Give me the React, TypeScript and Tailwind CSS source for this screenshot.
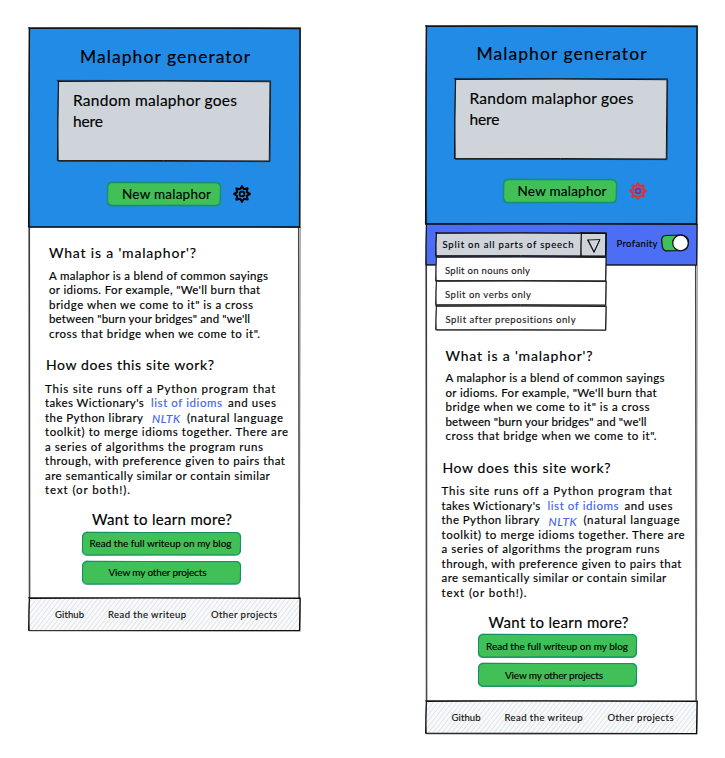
import { useLayoutEffect, useRef, useState, type ReactNode } from "react";

/** One line of text whose tracking is adjusted so that it fills the given width. */
function Line({ w, className = "", children }: { w: number; className?: string; children: ReactNode }) {
  const ref = useRef<HTMLSpanElement>(null);
  const [spacing, setSpacing] = useState(0);
  useLayoutEffect(() => {
    const el = ref.current;
    if (!el) return;
    el.style.letterSpacing = "0px";
    const natural = el.getBoundingClientRect().width;
    const count = Math.max(1, (el.textContent ?? "").length - 1);
    const next = (w - natural) / count;
    el.style.letterSpacing = `${next}px`;
    setSpacing(next);
  }, [w]);
  return (
    <div className={`whitespace-pre ${className}`}>
      <span ref={ref} style={{ letterSpacing: `${spacing}px` }}>
        {children}
      </span>
    </div>
  );
}

/** Hand-drawn outline: two slightly disagreeing strokes. */
function Sketch({ w, h, color = "#111", k = 1, r = 0, sw = 1 }: { w: number; h: number; color?: string; k?: number; r?: number; sw?: number }) {
  return (
    <svg className="pointer-events-none absolute inset-0 overflow-visible" width={w} height={h} fill="none" stroke={color} strokeWidth={sw} strokeLinecap="round">
      {r > 0 ? (
        <>
          <rect x={0.5} y={0.5} width={w - 1} height={h - 1} rx={r} />
          <path opacity={0.6} d={`M${r} 0Q${w / 2} ${k} ${w - r} 0.6Q${w} 0 ${w - 0.2} ${r}L${w - 1} ${h - r}Q${w} ${h} ${w - r} ${h - 0.3}Q${w / 2} ${h - 1} ${r} ${h}Q0 ${h} 0.3 ${h - r}L0.8 ${r}Q0 0 ${r} 0`} />
        </>
      ) : (
        <>
          <path d={`M0 ${0.4 * k}Q${w / 2} ${-0.4 * k} ${w} ${0.6 * k}L${w - 0.6 * k} ${h}Q${w / 2} ${h - 0.6 * k} ${-0.5 * k} ${h - 0.3 * k}L0.4 0`} />
          <path opacity={0.65} d={`M${-0.6 * k} ${-0.5 * k}L${w + 0.5 * k} ${-0.2 * k}Q${w + 0.5 * k} ${h / 2} ${w} ${h + 0.5 * k}L0.6 ${h + 0.3}Q${-k} ${h / 2} ${0.6 * k} ${-0.5 * k}`} />
        </>
      )}
    </svg>
  );
}

/** The two faint side strokes of the page body. */
function Sides({ h }: { h: number }) {
  return (
    <svg className="pointer-events-none absolute inset-0 overflow-visible" width={271} height={h} fill="none" stroke="#222" strokeWidth={1.1}>
      <path opacity={0.85} d={`M0.5 0L0.8 ${h}M269.5 0L270 ${h}`} />
      <path opacity={0.6} d={`M-0.3 0L0.2 ${h}M271.1 0L270.4 ${h}`} />
    </svg>
  );
}

function Gear({ color, inner }: { color: string; inner: string }) {
  return (
    <svg width="18" height="18" viewBox="-9 -9 18 18" fill="none" stroke={color} strokeWidth="2.1" strokeLinejoin="round">
      <path d="M0-7.8L1.8-4.8L5.5-5.7L4.7-2L7.8 0L4.7 1.9L5.6 5.5L2 4.7L0 7.8L-1.9 4.8L-5.6 5.6L-4.8 2L-7.8 0L-4.8-1.9L-5.5-5.5L-1.9-4.7Z" />
      <circle r="2.4" stroke={inner} strokeWidth="1.7" />
    </svg>
  );
}

function Header({ tall, active }: { tall: number; active?: boolean }) {
  return (
    <header className={`relative bg-[#228be6] ${active ? "h-[198px] pt-[18px]" : "h-[199px] pt-[19px]"}`}>
      <Line w={170} className="ml-[51px] text-[17.5px] leading-5">Malaphor generator</Line>
      <div className={`relative ml-[29px] h-20 w-[212px] bg-[#ced4da] pt-[9px] pl-[15px] text-[15.5px] leading-[21px] ${active ? "mt-[15px]" : "mt-[14px]"}`}>
        <Sketch w={212} h={80} k={1.2} />
        <Line w={164}>Random malaphor goes</Line>
        <Line w={30}>here</Line>
      </div>
      <div className={`flex items-center gap-[12px] ${active ? "mt-5 ml-[77px]" : "mt-[20.5px] ml-[78px]"}`}>
        <button className="relative block h-6 w-[114px] rounded-[5px] bg-[#40c057] pl-[15px] text-left text-[13.5px] leading-[22px]">
          <Sketch w={114} h={24} r={5} color="#159078" sw={1.3} />
          <Line w={89}>New malaphor</Line>
        </button>
        <Gear color={active ? "#e03131" : "#000"} inner={active ? "#a61e70" : "#000"} />
      </div>
      <Sketch w={271} h={tall} k={0.8} sw={1.3} />
    </header>
  );
}

const MALAPHOR: [number, string][] = [
  [219, "A malaphor is a blend of common sayings"],
  [211, 'or idioms. For example, "We\'ll burn that'],
  [204, 'bridge when we come to it" is a cross'],
  [201, 'between "burn your bridges" and "we\'ll'],
  [211, 'cross that bridge when we come to it".'],
];

const WORK: [number, string][] = [
  [243, "toolkit) to merge idioms together. There are"],
  [218, "a series of algorithms the program runs"],
  [240, "through, with preference given to pairs that"],
  [225, "are semantically similar or contain similar"],
  [85, "text (or both!)."],
];

function Body() {
  return (
    <>
      <Line w={147} className="ml-5 text-[14px] leading-[18px]">What is a 'malaphor'?</Line>
      <div className="mt-[6.5px] ml-5 text-[11.5px] leading-[14.5px]">
        {MALAPHOR.map(([w, t]) => (
          <Line key={t} w={w}>{t}</Line>
        ))}
      </div>
      <Line w={168} className="mt-[15px] ml-[17px] text-[14px] leading-[18px]">How does this site work?</Line>
      <div className="mt-[7.5px] ml-4 text-[11.5px] leading-[14.5px]">
        <Line w={230}>This site runs off a Python program that</Line>
        <div className="flex">
          <Line w={99} className="w-[106px]">takes Wictionary's</Line>
          <Line w={71} className="w-[77px] text-[#4263eb]">list of idioms</Line>
          <Line w={48}>and uses</Line>
        </div>
        <div className="flex h-[14.5px]">
          <Line w={98} className="w-[107px]">the Python library</Line>
          <Line w={28} className="w-[35px] pt-[1.5px] text-[#4263eb] italic">NLTK</Line>
          <Line w={96}>(natural language</Line>
        </div>
        {WORK.map(([w, t]) => (
          <Line key={t} w={w}>{t}</Line>
        ))}
      </div>
      <Line w={140} className="mt-[12.5px] ml-[63px] text-[15px] leading-[18px]">Want to learn more?</Line>
      <div className="mt-[3.5px] ml-[52.5px] flex flex-col gap-[5.5px] text-[10px] leading-[22px]">
        <button className="relative block h-[23.5px] w-[159px] rounded-[5px] bg-[#40c057] pl-[8px] text-left">
          <Sketch w={159} h={23.5} r={5} color="#159068" />
          <Line w={142}>Read the full writeup on my blog</Line>
        </button>
        <button className="relative block h-[23.5px] w-[159px] rounded-[5px] bg-[#40c057] pl-[27px] text-left">
          <Sketch w={159} h={23.5} r={5} color="#159068" />
          <Line w={98}>View my other projects</Line>
        </button>
      </div>
    </>
  );
}

function Footer() {
  return (
    <footer className="relative flex h-8 bg-[repeating-linear-gradient(128deg,#f8f9fa_0px,#f8f9fa_2px,#dfe3e6_2.8px,#f8f9fa_3.7px)] pl-[26px] text-[9.5px] leading-[33px] text-[#111]">
      <Line w={29} className="w-[53px]">Github</Line>
      <Line w={78} className="w-[103px]">Read the writeup</Line>
      <Line w={66}>Other projects</Line>
      <Sketch w={271} h={32.5} k={0.9} sw={1.1} />
    </footer>
  );
}

function Option({ w, label, pad }: { w: number; label: string; pad: string }) {
  return (
    <div className={`relative h-[24.7px] bg-white text-[9.5px] leading-[27px] text-[#222] ${pad}`}>
      <Line w={w}>{label}</Line>
      <Sketch w={170} h={24} k={0.9} color="#222" />
    </div>
  );
}

function Settings() {
  return (
    <div className="relative z-10 h-[41px] bg-[#4c6ef5]">
      <Sketch w={271} h={41} k={0.7} />
      <div className="flex pt-[9px] pl-[10px]">
        <div className="relative h-[23px] w-[170px]">
          <div className="flex h-[23px] bg-[#ced4da] text-[9.5px] leading-[24px]">
            <Line w={131} className="w-[145px] pl-[7px]">Split on all parts of speech</Line>
            <div className="relative h-[24px] w-[25px]">
              <Sketch w={25} h={24} k={0.7} />
              <svg width="25" height="24" fill="none" stroke="#111" strokeWidth="0.9">
                <path d="M6.5 7L19 6.5L13 19.5ZM7 6.5L13 18.7L18.7 7" />
              </svg>
            </div>
          </div>
          <Sketch w={170} h={23} k={0.9} />
          <div className="absolute top-[23.5px] left-0 w-[170px]">
            <Option w={85} pad="pl-[9.5px]" label="Split on nouns only" />
            <Option w={86} pad="pl-[9.5px]" label="Split on verbs only" />
            <Option w={130} pad="pl-[10px]" label="Split after prepositions only" />
          </div>
        </div>
        <Line w={41} className="ml-[11px] w-[43.5px] text-[9.5px] leading-[21px]">Profanity</Line>
        <svg width="31" height="20" viewBox="0 0 31 20" className="overflow-visible" stroke="#111" strokeWidth="1.2">
          <path fill="#40c057" d="M6 2.5L22 2Q29 3 28.5 10Q28 17 22 17.5L6 17.8Q2.5 17 2.3 13L1.6 7Q2 2.5 6 2.5Z" />
          <circle cx="20.5" cy="10" r="7.8" fill="#fff" />
        </svg>
      </div>
    </div>
  );
}

export default function App() {
  return (
    <main className="flex h-[758px] w-[725px] items-start overflow-hidden bg-white pl-[29px] font-[Lato,'Open_Sans',sans-serif] text-black [-webkit-text-stroke:0.15px]">
      <section className="mt-7 w-[271px]">
        <Header tall={199} />
        <div className="relative h-[371px] pt-[17px]">
          <Sides h={371} />
          <Body />
        </div>
        <Footer />
      </section>
      <section className="mt-[26px] ml-[125.5px] w-[271px]">
        <Header tall={198} active />
        <Settings />
        <div className="relative h-[435.5px] pt-[81.5px]">
          <Sides h={435.5} />
          <Body />
        </div>
        <Footer />
      </section>
    </main>
  );
}
